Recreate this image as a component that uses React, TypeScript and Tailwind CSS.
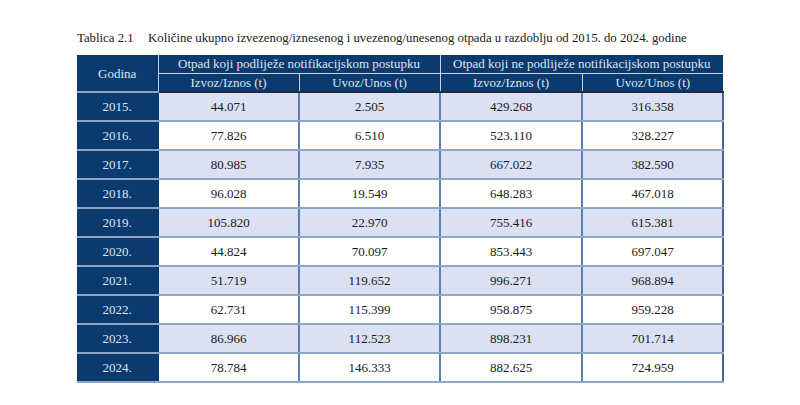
const rows = [
  ["2015.", "44.071", "2.505", "429.268", "316.358"],
  ["2016.", "77.826", "6.510", "523.110", "328.227"],
  ["2017.", "80.985", "7.935", "667.022", "382.590"],
  ["2018.", "96.028", "19.549", "648.283", "467.018"],
  ["2019.", "105.820", "22.970", "755.416", "615.381"],
  ["2020.", "44.824", "70.097", "853.443", "697.047"],
  ["2021.", "51.719", "119.652", "996.271", "968.894"],
  ["2022.", "62.731", "115.399", "958.875", "959.228"],
  ["2023.", "86.966", "112.523", "898.231", "701.714"],
  ["2024.", "78.784", "146.333", "882.625", "724.959"],
];

const App = () => {
  return (
    <div className="w-[800px] h-[405px] bg-white font-['Liberation_Serif',serif] text-[13px] text-[#1a1a1a]">
      <div className="pl-[77px] pt-[29px] flex text-[12.8px]">
        <span className="w-[71px]">Tablica 2.1</span>
        <span>Količine ukupno izvezenog/iznesenog i uvezenog/unesenog otpada u razdoblju od 2015. do 2024. godine</span>
      </div>
      <table className="ml-[77px] mt-[7px] border-collapse table-fixed w-[646px]">
        <colgroup>
          <col className="w-[81px]" />
          <col className="w-[141px]" />
          <col className="w-[141px]" />
          <col className="w-[142px]" />
          <col className="w-[141px]" />
        </colgroup>
        <thead>
          <tr className="h-[18px] bg-[#0b3a6e] text-[#dfe5ef]">
            <th rowSpan={2} className="font-normal border-b-2 border-b-[#8ea6c8] border-r border-r-[#c9d3e4] leading-none">
              Godina
            </th>
            <th colSpan={2} className="font-normal border-r border-r-[#c9d3e4] border-b border-b-[#c9d3e4] leading-none">
              Otpad koji podliježe notifikacijskom postupku
            </th>
            <th colSpan={2} className="font-normal border-b border-b-[#c9d3e4] leading-none">
              Otpad koji ne podliježe notifikacijskom postupku
            </th>
          </tr>
          <tr className="h-[19px] bg-[#0b3a6e] text-[#dfe5ef]">
            {["Izvoz/Iznos (t)", "Uvoz/Unos (t)", "Izvoz/Iznos (t)", "Uvoz/Unos (t)"].map((h, i) => (
              <th
                key={i}
                className={`font-normal leading-none border-b-2 border-b-[#1d2d44] ${i < 3 ? "border-r border-r-[#c9d3e4]" : ""}`}
              >
                {h}
              </th>
            ))}
          </tr>
        </thead>
        <tbody>
          {rows.map((r, i) => (
            <tr key={r[0]} className={`h-[29px] ${i % 2 === 0 ? "bg-[#dbe1f2]" : "bg-white"}`}>
              <td className="bg-[#0b3a6e] text-[#dfe5ef] text-center border-b-2 border-b-[#8ea6c8] border-r-2 border-r-[#0b3a6e]">
                {r[0]}
              </td>
              {r.slice(1).map((v, j) => (
                <td
                  key={j}
                  className={`text-center border-b-2 border-b-[#8ea6c8] ${j < 3 ? "border-r-2 border-r-[#5b7fae]" : "border-r-2 border-r-[#3f6699]"}`}
                >
                  {v}
                </td>
              ))}
            </tr>
          ))}
        </tbody>
      </table>
    </div>
  );
};

export default App;
